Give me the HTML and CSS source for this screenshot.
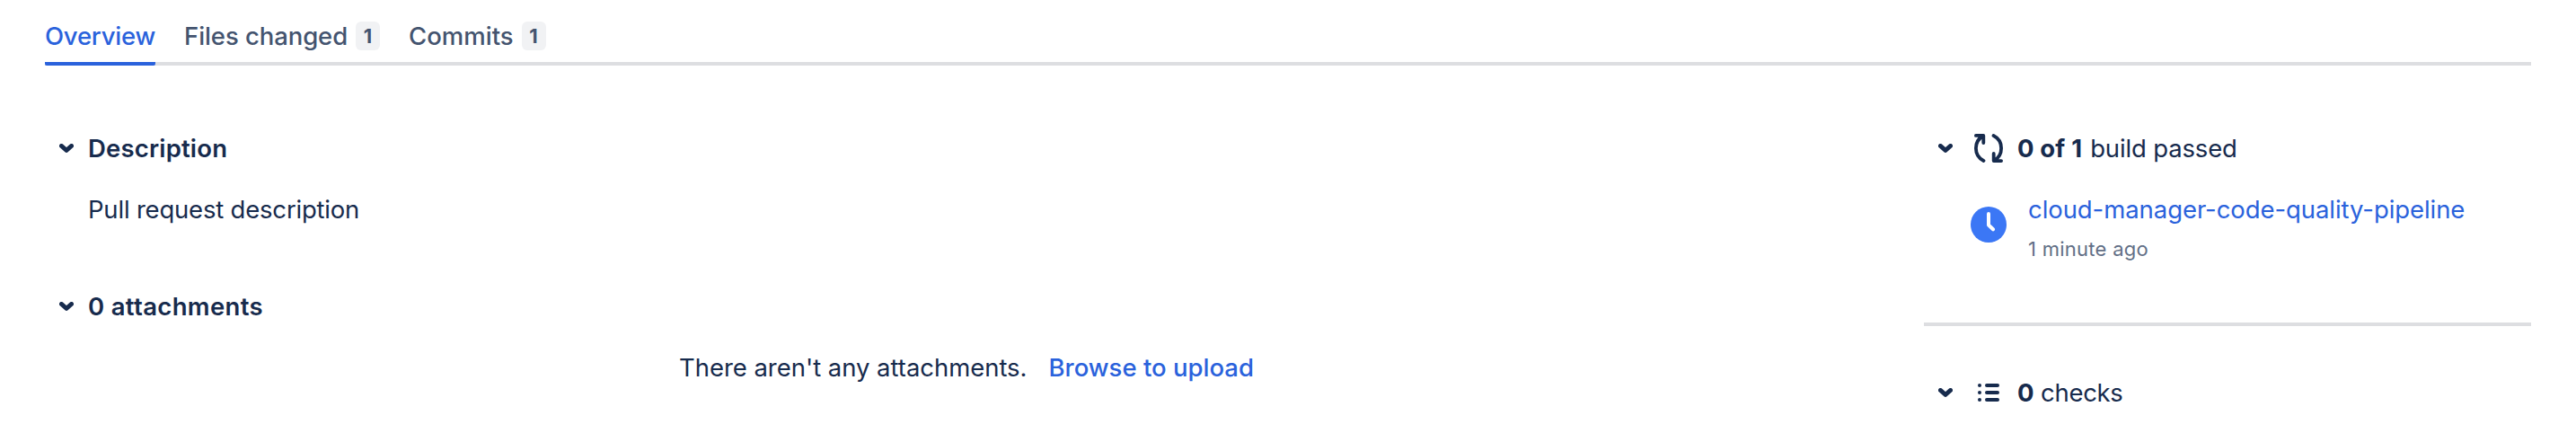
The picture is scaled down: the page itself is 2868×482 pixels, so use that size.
FILE: index.html
```html
<!DOCTYPE html>
<html lang="en">
<head>
<meta charset="utf-8">
<title>Pull request</title>
<link rel="stylesheet" href="styles.css">
</head>
<body>
<svg class="defs" aria-hidden="true">
  <symbol id="chevron" viewBox="0 0 16 10"><path d="M2.400 2.400 8 7.400l5.600-5" fill="none" stroke="currentColor" stroke-width="4.800" stroke-linecap="round" stroke-linejoin="round"/></symbol>
</svg>
<nav class="tabs">
  <a class="tab tab-active"><span class="t-overview">Overview</span></a>
  <a class="tab"><span class="t-files">Files changed</span><span class="badge">1</span></a>
  <a class="tab"><span class="t-commits">Commits</span><span class="badge">1</span></a>
</nav>
<div class="columns">
  <main class="main">
    <section class="section">
      <h2 class="heading"><svg class="chevron"><use href="#chevron"/></svg><span class="t-desc">Description</span></h2>
      <p class="description"><span class="t-pull">Pull request description</span></p>
    </section>
    <section class="section">
      <h2 class="heading"><svg class="chevron"><use href="#chevron"/></svg><span class="t-attach">0 attachments</span></h2>
      <p class="empty"><span class="t-empty">There aren't any attachments.</span><a class="browse">Browse to upload</a></p>
    </section>
  </main>
  <aside class="side">
    <section class="builds">
      <h2 class="heading side-heading">
        <svg class="chevron"><use href="#chevron"/></svg>
        <svg class="icon" viewBox="0 0 32 32" fill="none" stroke="currentColor" stroke-width="3.800" stroke-linecap="round" stroke-linejoin="round">
          <path d="M1.900 1.900h8.400v8.100M9.500 2.500C4.500 5.500 1.900 10.500 1.900 16c0 6 3.300 11.300 8.600 14"/>
          <path d="M30.100 30.100h-8.400v-8.100M22.500 29.500c5-3 7.600-8 7.600-13.500 0-6-3.300-11.300-8.600-14"/>
        </svg>
        <span class="label"><b class="t-of">0 of 1</b><span class="t-build">build passed</span></span>
      </h2>
      <div class="build">
        <svg class="clock" viewBox="0 0 40 40"><circle cx="20" cy="20" r="20"/><path d="M20 8v12.500l5 4.800"/></svg>
        <div class="build-text"><a class="link">cloud-manager-code-quality-pipeline</a><span class="time">1 minute ago</span></div>
      </div>
    </section>
    <section class="checks">
      <h2 class="heading side-heading">
        <svg class="chevron"><use href="#chevron"/></svg>
        <svg class="icon" viewBox="0 0 32 32" fill="currentColor">
          <circle cx="6" cy="8" r="2"/><circle cx="6" cy="16" r="2"/><circle cx="6" cy="24" r="2"/>
          <rect x="12" y="6" width="16" height="4" rx="2"/><rect x="12" y="14" width="16" height="4" rx="2"/><rect x="12" y="22" width="16" height="4" rx="2"/>
        </svg>
        <span class="label"><b>0</b><span class="t-checks">checks</span></span>
      </h2>
    </section>
  </aside>
</div>
</body>
</html>
```
FILE: styles.css
```css
* { box-sizing: border-box; }
body { margin: 0; height: 482px; overflow: hidden; background: #fff; color: #172b4d; font: 400 27.5px/40px Inter, sans-serif; }
h2, p { margin: 0; font-size: inherit; font-weight: inherit; }
span, a { white-space: nowrap; }
.defs { position: absolute; width: 0; height: 0; }
.tabs { display: flex; gap: 32px; margin: 0 50px; height: 73px; padding-top: 20px; box-shadow: inset 0 -4px #dddee1; color: #44546f; font-weight: 500; }
.tab { display: flex; height: 53px; }
.tab-active { width: 123px; color: #2a62dc; border-bottom: 4px solid #2a62dc; border-radius: 2px; }
.t-overview { letter-spacing: -0.22px; }
.t-files { letter-spacing: -0.08px; }
.badge { width: 27px; height: 32px; margin: 4px 0 0 9px; border-radius: 6px; background: #f1f2f4; text-align: center; font-size: 22px; font-weight: 700; line-height: 32px; }
.columns { display: grid; grid-template-columns: 2042px 676px; gap: 50px; padding: 72px 50px 0; }
.section + .section { margin-top: 68px; }
.heading { display: flex; align-items: center; gap: 16px; height: 40px; padding-left: 16px; font-weight: 600; }
.chevron { flex: none; width: 16px; height: 10px; }
.t-desc { letter-spacing: 0.17px; }
.t-attach { letter-spacing: 0.33px; }
.description { padding: 28px 0 0 48px; }
.t-pull { letter-spacing: -0.2px; }
.empty { display: flex; gap: 24px; padding: 28px 0 0 706px; }
.t-empty { letter-spacing: -0.04px; }
.browse { color: #2a62dc; font-weight: 500; }
.side-heading { font-weight: 400; gap: 24px; }
.icon { flex: none; width: 32px; height: 32px; }
.label { display: flex; gap: 9px; margin-left: -8px; }
.label b { font-weight: 700; }
.t-of { letter-spacing: 0.15px; }
.t-build { letter-spacing: -0.15px; }
.t-checks { margin-left: -1.500px; letter-spacing: -0.3px; }
.build { display: flex; gap: 24px; padding: 28px 0 66px 52px; }
.clock { width: 40px; height: 40px; margin-top: 17px; fill: #3b77f5; }
.clock path { fill: none; stroke: #fff; stroke-width: 4; stroke-linecap: round; stroke-linejoin: round; }
.build-text { display: flex; flex-direction: column; align-items: flex-start; gap: 8px; }
.link { color: #2a62dc; letter-spacing: -0.07px; }
.time { color: #626f86; font-size: 22px; line-height: 32px; letter-spacing: 0.27px; }
.checks { border-top: 4px solid #dddee1; padding-top: 54px; }
```
